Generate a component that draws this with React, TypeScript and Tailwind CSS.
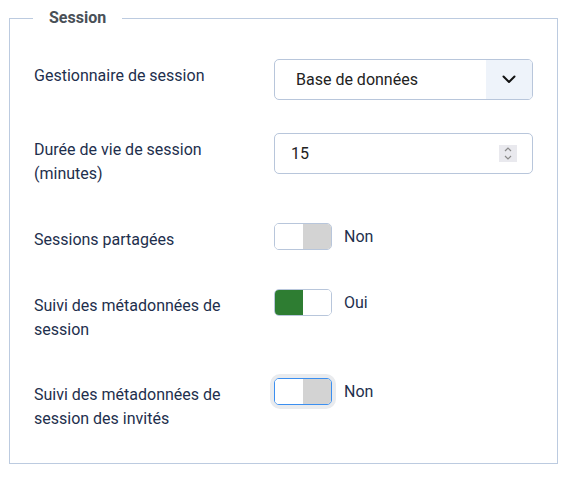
import React from "react";

const Toggle = ({ on, focused }: { on: boolean; focused?: boolean }) => {
  return (
    <div className="flex items-center gap-3">
      <div className={`rounded-[6px] ${focused ? "ring-4 ring-[#e9ebee]" : ""}`}>
        <div
          className={`flex h-[27px] w-[58px] overflow-hidden rounded-[5px] border ${
            focused ? "border-[#3b8ff0]" : "border-[#b8c6db]"
          }`}
        >
          {on ? (
            <>
              <div className="w-1/2 bg-[#2e7d32]" />
              <div className="w-1/2 bg-white" />
            </>
          ) : (
            <>
              <div className="w-1/2 bg-white" />
              <div className="w-1/2 bg-[#d3d3d3]" />
            </>
          )}
        </div>
      </div>
      <span className="text-[16px] leading-6 text-[#1e2f4d]">{on ? "Oui" : "Non"}</span>
    </div>
  );
};

const Row = ({
  label,
  children,
  className,
}: {
  label: React.ReactNode;
  children: React.ReactNode;
  className?: string;
}) => (
  <div className={`flex items-start ${className ?? ""}`}>
    <div className="w-[240px] shrink-0 pr-4 pt-[5px] text-[16px] leading-6 text-[#1e2f4d]">
      {label}
    </div>
    <div className="w-[259px]">{children}</div>
  </div>
);

export default function App() {
  return (
    <div
      className="min-h-[481px] bg-white pt-[6px] pl-[9px]"
      style={{ fontFamily: "Roboto, 'Liberation Sans', sans-serif" }}
    >
      <fieldset className="w-[549px] border border-[#bccbe0] px-[24px] pb-[32px] pt-[29px]">
        <legend className="ml-[-1px] px-4 text-[16px] leading-6 font-bold text-[#495057]">
          Session
        </legend>

        <Row label="Gestionnaire de session">
          <div className="flex h-[41px] overflow-hidden rounded-[5px] border border-[#b8c6db]">
            <div className="flex flex-1 items-center pl-[21px] text-[16px] text-[#222]">
              Base de données
            </div>
            <div className="flex w-[46px] items-center justify-center bg-[#eef3fa]">
              <svg width="14" height="9" viewBox="0 0 14 9" fill="none">
                <path d="M1.5 1.5 7 7l5.5-5.5" stroke="#111" strokeWidth="2" strokeLinecap="round" strokeLinejoin="round" />
              </svg>
            </div>
          </div>
        </Row>

        <Row label={<>Durée de vie de session<br />(minutes)</>} className="mt-[33px]">
          <div className="flex h-[41px] items-center rounded-[5px] border border-[#b8c6db] pl-[16px] pr-[15px]">
            <span className="flex-1 text-[16px] text-[#222]">15</span>
            <div className="flex h-[17px] w-[18px] flex-col items-center justify-center gap-[3px] bg-[#e9e9ee]">
              <svg width="8" height="5" viewBox="0 0 8 5" fill="none">
                <path d="M1 4 4 1 7 4" stroke="#8a8a8a" strokeWidth="1.2" />
              </svg>
              <svg width="8" height="5" viewBox="0 0 8 5" fill="none">
                <path d="M1 1 4 4 7 1" stroke="#8a8a8a" strokeWidth="1.2" />
              </svg>
            </div>
          </div>
        </Row>

        <Row label="Sessions partagées" className="mt-[37px]">
          <Toggle on={false} />
        </Row>

        <Row label={<>Suivi des métadonnées de<br />session</>} className="mt-[37px]">
          <Toggle on={true} />
        </Row>

        <Row label={<>Suivi des métadonnées de<br />session des invités</>} className="mt-[36px]">
          <Toggle on={false} focused />
        </Row>
      </fieldset>
    </div>
  );
}
